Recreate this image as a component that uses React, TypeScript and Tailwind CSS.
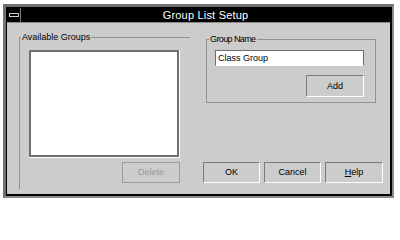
import React from "react";

const font = { fontFamily: '"Liberation Sans", Arial, sans-serif' };

function Btn({ children, w = "w-[57px]", h = "h-[21px]" }: { children: React.ReactNode; w?: string; h?: string }) {
  return (
    <div
      className={`${w} ${h} flex items-center justify-center border border-t-[#7a7a7a] border-l-[#7a7a7a] border-r-white border-b-white text-[9px] text-black leading-none`}
    >
      {children}
    </div>
  );
}

export default function App() {
  return (
    <div className="w-[400px] h-[204px] bg-white overflow-hidden" style={font}>
      <div className="ml-[3px] mt-[4px] w-[391px] h-[194px] border-[3px] border-[#727272] border-b-2 border-r-2 border-r-[#8a8a8a] border-b-[#8a8a8a]">
        <div className="w-full h-full border border-black border-r-2 border-b-2 flex flex-col">
          {/* title bar */}
          <div className="h-[14px] bg-black flex items-stretch shrink-0">
            <div className="w-[14px] flex items-center justify-center border-r border-[#7a7a7a]">
              <div className="w-[10px] h-[4px] border border-[#d0d0d0] mt-[-1px]" />
            </div>
            <div className="flex-1 flex items-center justify-center text-white text-[11px] leading-none tracking-[0.2px]">
              Group List Setup
            </div>
          </div>
          {/* body */}
          <div className="flex-1 bg-[#cccccc] border-t border-[#8a8a8a] flex flex-row pl-[12px]">
            {/* left column */}
            <div className="w-[171px]">
              <div className="relative mt-[14px] h-[152px] border-t border-l border-[#929292] pl-[9px] pt-[12px]">
                <div className="absolute left-[1px] top-[-6px] px-[1px] bg-[#cccccc] text-[9px] leading-[10px] text-black">
                  Available Groups
                </div>
                <div className="w-[151px] h-[108px] border-r border-b border-white">
                  <div className="w-full h-full bg-white border-2 border-[#6e6e6e]" />
                </div>
                <div className="w-[151px] flex justify-end mt-[4px]">
                  <div className="w-[58px] h-[21px] flex items-center justify-center border border-[#9c9c9c] text-[9px] text-[#9a9a9a] leading-none">
                    Delete
                  </div>
                </div>
              </div>
            </div>
            {/* right column */}
            <div className="ml-[13px] flex flex-col">
              <div className="relative ml-[3px] mt-[16px] w-[170px] h-[64px] border border-[#929292] pl-[8px] pt-[10px]">
                <div className="absolute left-[2px] top-[-6px] px-[1px] bg-[#cccccc] text-[9px] leading-[10px] text-black tracking-[-0.6px]">
                  Group Name
                </div>
                <div className="w-[149px] h-[16px] bg-white border border-[#6e6e6e] border-b-white flex items-center pl-[2px] text-[9px] leading-none text-black">
                  Class Group
                </div>
                <div className="w-[149px] flex justify-end mt-[9px]">
                  <Btn w="w-[58px]" h="h-[22px]">Add</Btn>
                </div>
              </div>
              <div className="mt-[59px] flex flex-row gap-[4px]">
                <Btn>OK</Btn>
                <Btn>Cancel</Btn>
                <Btn w="w-[58px]">
                  <span>
                    <span className="underline">H</span>elp
                  </span>
                </Btn>
              </div>
            </div>
          </div>
        </div>
      </div>
    </div>
  );
}
